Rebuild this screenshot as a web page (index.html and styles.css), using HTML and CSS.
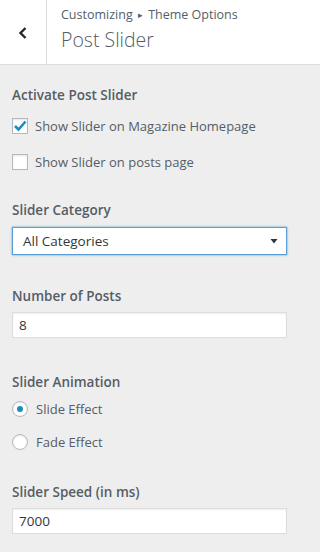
FILE: index.html
```html
<!DOCTYPE html>
<html>
<head>
<meta charset="utf-8">
<link rel="stylesheet" href="styles.css">
</head>
<body>
<header class="head">
  <div class="back">
    <svg width="10" height="12" viewBox="0 0 10 12"><polyline points="7.5,1 2.5,6 7.5,11" fill="none" stroke="#23282d" stroke-width="2.4"/></svg>
  </div>
  <div class="titles">
    <div class="crumb">Customizing <span class="tri">▸</span> Theme Options</div>
    <div class="title">Post Slider</div>
  </div>
</header>
<main class="panel">
  <section class="ctl ctl-activate">
    <div class="label">Activate Post Slider</div>
    <div class="opt opt-first">
      <span class="box"><svg width="16" height="16" viewBox="0 0 16 16"><polyline points="3,8 6.5,11.5 13.5,3.5" fill="none" stroke="#1e8cbe" stroke-width="2.6"/></svg></span>
      <span>Show Slider on Magazine Homepage</span>
    </div>
    <div class="opt opt-next">
      <span class="box"></span>
      <span>Show Slider on posts page</span>
    </div>
  </section>
  <section class="ctl ctl-category">
    <div class="label">Slider Category</div>
    <div class="select">
      <span>All Categories</span>
      <svg width="8" height="6" viewBox="0 0 8 6"><polygon points="0.5,1 7.5,1 4,5.5" fill="#32373c"/></svg>
    </div>
  </section>
  <section class="ctl ctl-number">
    <div class="label">Number of Posts</div>
    <div class="input">8</div>
  </section>
  <section class="ctl ctl-anim">
    <div class="label">Slider Animation</div>
    <div class="opt radio-first">
      <span class="radio on"></span>
      <span>Slide Effect</span>
    </div>
    <div class="opt radio-next">
      <span class="radio"></span>
      <span>Fade Effect</span>
    </div>
  </section>
  <section class="ctl ctl-speed">
    <div class="label">Slider Speed (in ms)</div>
    <div class="input">7000</div>
  </section>
</main>
</body>
</html>
```
FILE: styles.css
```css
html, body {
  margin: 0;
  padding: 0;
  background: #eeeeee;
  font-family: "Open Sans", "Noto Sans", sans-serif;
  font-size: 13px;
  color: #555d66;
}
.head {
  display: flex;
  height: 64px;
  background: #ffffff;
  border-bottom: 1px solid #dddddd;
}
.back {
  width: 47px;
  border-right: 1px solid #dddddd;
  display: flex;
  align-items: center;
  justify-content: center;
  padding-top: 2px;
  box-sizing: border-box;
}
.titles {
  padding-left: 14px;
  padding-top: 5px;
}
.crumb {
  font-size: 12.5px;
  line-height: 20px;
  color: #555d66;
}
.tri {
  font-size: 9px;
  position: relative;
  top: -1px;
  margin: 0 2px;
}
.title {
  font-size: 19.5px;
  font-weight: 300;
  line-height: 28px;
  color: #555d66;
}
.panel {
  padding: 20px 8px 0 12px;
}
.label {
  font-size: 13.5px;
  font-weight: 600;
  line-height: 20px;
}
.opt {
  display: flex;
  align-items: center;
  height: 20px;
  line-height: 20px;
  font-size: 13px;
}
.opt-first { margin-top: 11px; }
.opt-next { margin-top: 16px; }
.box {
  width: 16px;
  height: 16px;
  box-sizing: border-box;
  border: 1px solid #b4b9be;
  background: #ffffff;
  box-shadow: inset 0 1px 2px rgba(0,0,0,0.1);
  margin-right: 7px;
  display: flex;
  align-items: center;
  justify-content: center;
  overflow: visible;
}
.box svg { flex: none; }
.radio {
  width: 16px;
  height: 16px;
  box-sizing: border-box;
  border: 1px solid #b4b9be;
  border-radius: 50%;
  background: #ffffff;
  box-shadow: inset 0 1px 2px rgba(0,0,0,0.1);
  margin-right: 8px;
  display: flex;
  align-items: center;
  justify-content: center;
}
.radio.on::after {
  content: "";
  width: 6px;
  height: 6px;
  border-radius: 50%;
  background: #1e8cbe;
}
.ctl-category { margin-top: 28px; }
.ctl-number { margin-top: 31px; }
.ctl-anim { margin-top: 34px; }
.ctl-speed { margin-top: 30px; }
.radio-first { margin-top: 7px; }
.radio-next { margin-top: 13px; }
.select {
  margin-top: 7px;
  height: 28px;
  width: 275px;
  box-sizing: border-box;
  background: #ffffff;
  border: 1px solid #5b9dd9;
  box-shadow: 0 0 2px rgba(30,140,190,0.8);
  display: flex;
  align-items: center;
  justify-content: space-between;
  padding: 0 8px 0 10px;
  color: #32373c;
  font-size: 13.5px;
}
.input {
  margin-top: 6px;
  height: 26px;
  width: 275px;
  box-sizing: border-box;
  background: #ffffff;
  border: 1px solid #dddddd;
  box-shadow: inset 0 1px 2px rgba(0,0,0,0.07);
  display: flex;
  align-items: center;
  padding: 0 6px;
  color: #32373c;
  font-size: 13.5px;
}
```
